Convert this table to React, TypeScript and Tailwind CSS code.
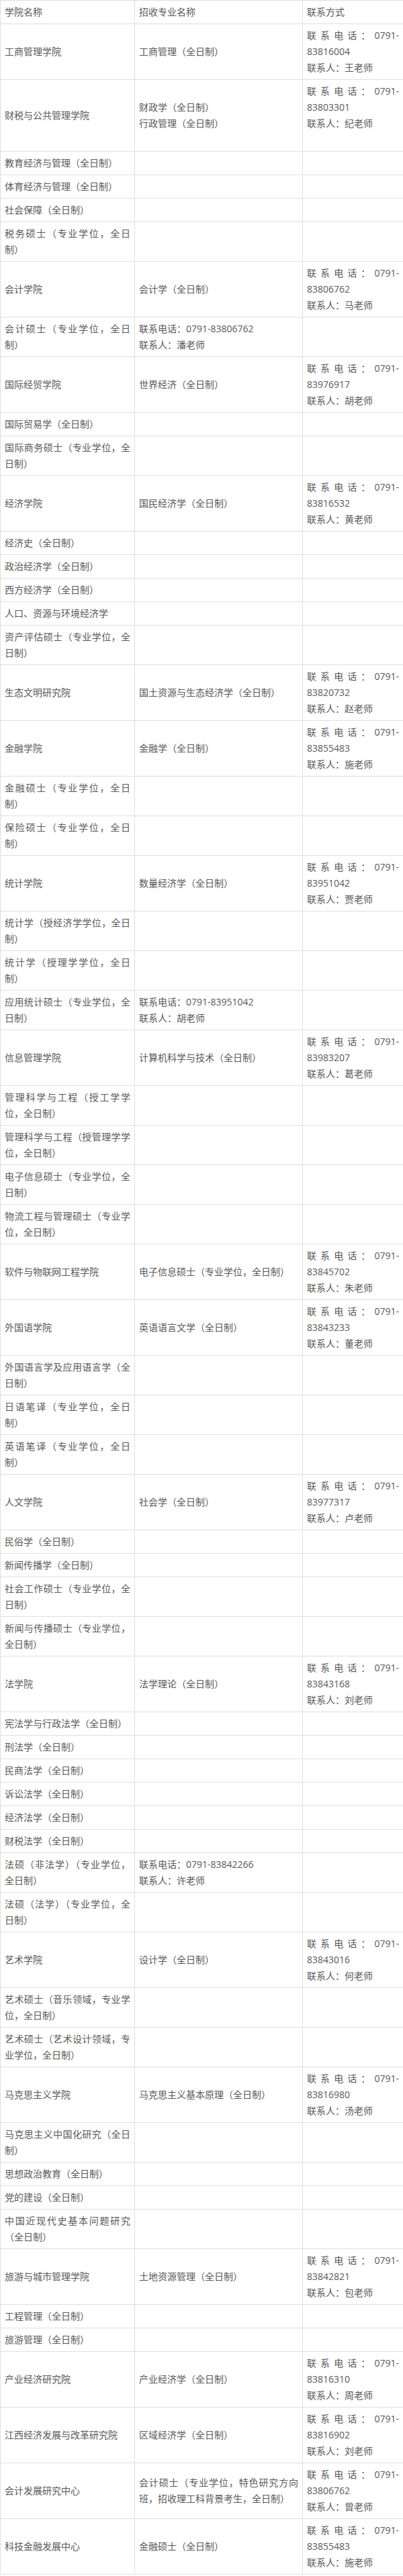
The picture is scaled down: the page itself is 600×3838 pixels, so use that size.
import React from "react";

type Row = {
  college: string;
  major: string[];
  contact: string[];
};

const phone = (n: string) => `联系电话：0791-\u200b${n}`;

const rows: Row[] = [
  { college: "工商管理学院", major: ["工商管理（全日制）"], contact: [phone("83816004"), "联系人：王老师"] },
  {
    college: "财税与公共管理学院",
    major: ["财政学（全日制）", "行政管理（全日制）"],
    contact: [phone("83803301"), "联系人：纪老师", ""],
  },
  { college: "教育经济与管理（全日制）", major: [], contact: [] },
  { college: "体育经济与管理（全日制）", major: [], contact: [] },
  { college: "社会保障（全日制）", major: [], contact: [] },
  { college: "税务硕士（专业学位，全日制）", major: [], contact: [] },
  { college: "会计学院", major: ["会计学（全日制）"], contact: [phone("83806762"), "联系人：马老师"] },
  {
    college: "会计硕士（专业学位，全日制）",
    major: ["联系电话：0791-83806762", "联系人：潘老师"],
    contact: [],
  },
  { college: "国际经贸学院", major: ["世界经济（全日制）"], contact: [phone("83976917"), "联系人：胡老师"] },
  { college: "国际贸易学（全日制）", major: [], contact: [] },
  { college: "国际商务硕士（专业学位，全日制）", major: [], contact: [] },
  { college: "经济学院", major: ["国民经济学（全日制）"], contact: [phone("83816532"), "联系人：黄老师"] },
  { college: "经济史（全日制）", major: [], contact: [] },
  { college: "政治经济学（全日制）", major: [], contact: [] },
  { college: "西方经济学（全日制）", major: [], contact: [] },
  { college: "人口、资源与环境经济学", major: [], contact: [] },
  { college: "资产评估硕士（专业学位，全日制）", major: [], contact: [] },
  {
    college: "生态文明研究院",
    major: ["国土资源与生态经济学（全日制）"],
    contact: [phone("83820732"), "联系人：赵老师"],
  },
  { college: "金融学院", major: ["金融学（全日制）"], contact: [phone("83855483"), "联系人：施老师"] },
  { college: "金融硕士（专业学位，全日制）", major: [], contact: [] },
  { college: "保险硕士（专业学位，全日制）", major: [], contact: [] },
  { college: "统计学院", major: ["数量经济学（全日制）"], contact: [phone("83951042"), "联系人：贾老师"] },
  { college: "统计学（授经济学学位，全日制）", major: [], contact: [] },
  { college: "统计学（授理学学位，全日制）", major: [], contact: [] },
  {
    college: "应用统计硕士（专业学位，全日制）",
    major: ["联系电话：0791-83951042", "联系人：胡老师"],
    contact: [],
  },
  {
    college: "信息管理学院",
    major: ["计算机科学与技术（全日制）"],
    contact: [phone("83983207"), "联系人：葛老师"],
  },
  { college: "管理科学与工程（授工学学位，全日制）", major: [], contact: [] },
  { college: "管理科学与工程（授管理学学位，全日制）", major: [], contact: [] },
  { college: "电子信息硕士（专业学位，全日制）", major: [], contact: [] },
  { college: "物流工程与管理硕士（专业学位，全日制）", major: [], contact: [] },
  {
    college: "软件与物联网工程学院",
    major: ["电子信息硕士（专业学位，全日制）"],
    contact: [phone("83845702"), "联系人：朱老师"],
  },
  { college: "外国语学院", major: ["英语语言文学（全日制）"], contact: [phone("83843233"), "联系人：董老师"] },
  { college: "外国语言学及应用语言学（全日制）", major: [], contact: [] },
  { college: "日语笔译（专业学位，全日制）", major: [], contact: [] },
  { college: "英语笔译（专业学位，全日制）", major: [], contact: [] },
  { college: "人文学院", major: ["社会学（全日制）"], contact: [phone("83977317"), "联系人：卢老师"] },
  { college: "民俗学（全日制）", major: [], contact: [] },
  { college: "新闻传播学（全日制）", major: [], contact: [] },
  { college: "社会工作硕士（专业学位，全日制）", major: [], contact: [] },
  { college: "新闻与传播硕士（专业学位，全日制）", major: [], contact: [] },
  { college: "法学院", major: ["法学理论（全日制）"], contact: [phone("83843168"), "联系人：刘老师"] },
  { college: "宪法学与行政法学（全日制）", major: [], contact: [] },
  { college: "刑法学（全日制）", major: [], contact: [] },
  { college: "民商法学（全日制）", major: [], contact: [] },
  { college: "诉讼法学（全日制）", major: [], contact: [] },
  { college: "经济法学（全日制）", major: [], contact: [] },
  { college: "财税法学（全日制）", major: [], contact: [] },
  {
    college: "法硕（非法学）（专业学位，全日制）",
    major: ["联系电话：0791-83842266", "联系人：许老师"],
    contact: [],
  },
  { college: "法硕（法学）（专业学位，全日制）", major: [], contact: [] },
  { college: "艺术学院", major: ["设计学（全日制）"], contact: [phone("83843016"), "联系人：何老师"] },
  { college: "艺术硕士（音乐领域，专业学位，全日制）", major: [], contact: [] },
  { college: "艺术硕士（艺术设计领域，专业学位，全日制）", major: [], contact: [] },
  {
    college: "马克思主义学院",
    major: ["马克思主义基本原理（全日制）"],
    contact: [phone("83816980"), "联系人：汤老师"],
  },
  { college: "马克思主义中国化研究（全日制）", major: [], contact: [] },
  { college: "思想政治教育（全日制）", major: [], contact: [] },
  { college: "党的建设（全日制）", major: [], contact: [] },
  { college: "中国近现代史基本问题研究（全日制）", major: [], contact: [] },
  {
    college: "旅游与城市管理学院",
    major: ["土地资源管理（全日制）"],
    contact: [phone("83842821"), "联系人：包老师"],
  },
  { college: "工程管理（全日制）", major: [], contact: [] },
  { college: "旅游管理（全日制）", major: [], contact: [] },
  { college: "产业经济研究院", major: ["产业经济学（全日制）"], contact: [phone("83816310"), "联系人：周老师"] },
  {
    college: "江西经济发展与改革研究院",
    major: ["区域经济学（全日制）"],
    contact: [phone("83816902"), "联系人：刘老师"],
  },
  {
    college: "会计发展研究中心",
    major: ["会计硕士（专业学位，特色研究方向班，招收理工科背景考生，全日制）"],
    contact: [phone("83806762"), "联系人：曾老师"],
  },
  { college: "科技金融发展中心", major: ["金融硕士（全日制）"], contact: [phone("83855483"), "联系人：施老师"] },
];

const cell = "border border-[#dfdfdf] px-[6px] py-[5px] align-middle text-justify break-words";

function Lines({ lines }: { lines: string[] }) {
  if (lines.length === 0) return <p className="leading-6"><br /></p>;
  return (
    <>
      {lines.map((line, i) => (
        <p key={i} className="leading-6">
          {line || <br />}
        </p>
      ))}
    </>
  );
}

export default function App() {
  return (
    <div className="w-[600px] bg-white pb-[2px] font-['Open_Sans','Noto_Sans_CJK_SC',sans-serif] text-[14px] text-[#595959]">
      <table className="w-[600px] table-fixed border-collapse">
        <colgroup>
          <col className="w-[200px]" />
          <col className="w-[250px]" />
          <col className="w-[150px]" />
        </colgroup>
        <tbody>
          <tr>
            <td className={cell}>
              <p className="leading-6">学院名称</p>
            </td>
            <td className={cell}>
              <p className="leading-6">招收专业名称</p>
            </td>
            <td className={cell}>
              <p className="leading-6">联系方式</p>
            </td>
          </tr>
          {rows.map((r, i) => (
            <tr key={i}>
              <td className={cell}>
                <p className="leading-6">{r.college}</p>
              </td>
              <td className={cell}>
                <Lines lines={r.major} />
              </td>
              <td className={`${cell} ${r.contact.length === 3 ? "align-top" : ""}`}>
                <Lines lines={r.contact} />
              </td>
            </tr>
          ))}
        </tbody>
      </table>
    </div>
  );
}
